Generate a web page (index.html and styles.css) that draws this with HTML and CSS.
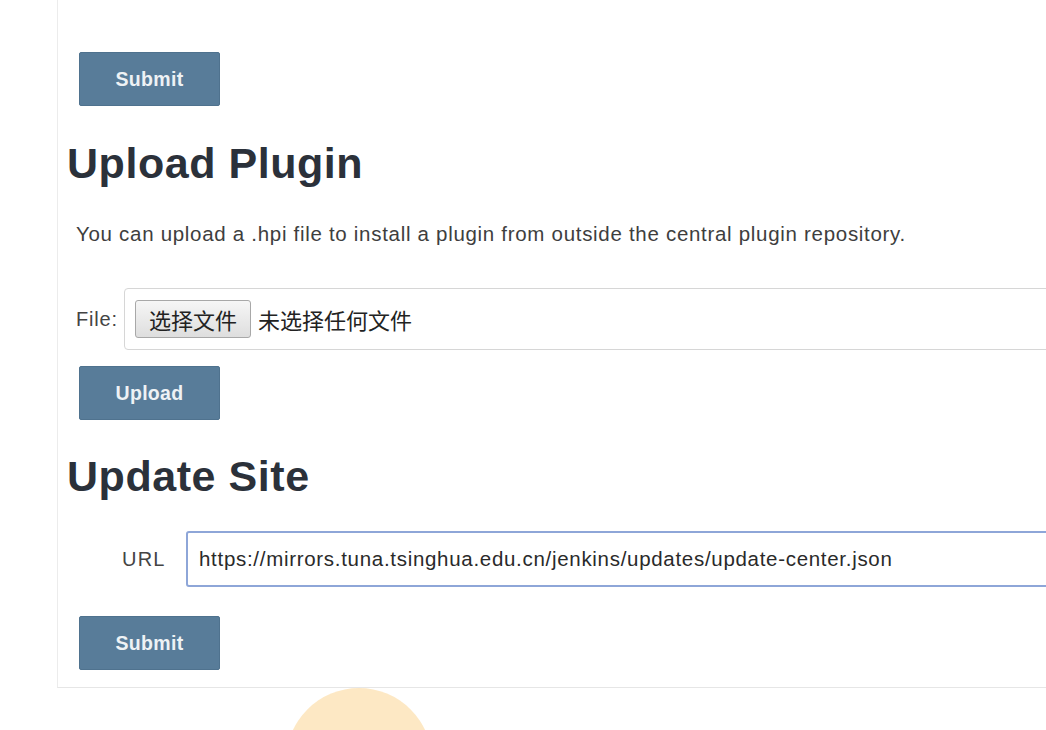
FILE: index.html
```html
<!DOCTYPE html>
<html lang="zh-CN">
<head>
<meta charset="utf-8">
<title>Plugin Manager - Advanced</title>
<link rel="stylesheet" href="styles.css">
</head>
<body>
<div class="page">
  <div class="panel">
    <button class="btn" type="button">Submit</button>

    <h1 class="section-title">Upload Plugin</h1>
    <p class="desc">You can upload a .hpi file to install a plugin from outside the central plugin repository.</p>
    <div class="file-row">
      <span class="file-label">File:</span>
      <div class="file-box">
        <span class="file-btn">选择文件</span>
        <span class="file-name">未选择任何文件</span>
      </div>
    </div>
    <button class="btn btn-upload" type="button">Upload</button>

    <h1 class="section-title section-update">Update Site</h1>
    <div class="url-row">
      <span class="url-label">URL</span>
      <input class="url-input" type="text" value="https://mirrors.tuna.tsinghua.edu.cn/jenkins/updates/update-center.json">
    </div>
    <button class="btn btn-submit2" type="button">Submit</button>
  </div>
  <div class="cursor-dot"></div>
</div>
</body>
</html>
```

FILE: styles.css
```css
html, body {
  margin: 0;
  padding: 0;
  background: #ffffff;
  overflow: hidden;
  height: 730px;
}

.page {
  position: relative;
  height: 730px;
  overflow: hidden;
  font-family: "Liberation Sans", Arial, "Noto Sans CJK SC", sans-serif;
  color: #333333;
}

.panel {
  margin-left: 57px;
  border-left: 1px solid #ececec;
  border-bottom: 1px solid #e6e6e6;
  padding-top: 52px;
  padding-bottom: 17px;
  display: flex;
  flex-direction: column;
  align-items: stretch;
}

.btn {
  display: block;
  align-self: flex-start;
  width: 141px;
  height: 54px;
  margin: 0 0 0 21px;
  padding: 0;
  border: 1px solid #4f728e;
  border-radius: 2px;
  background: #587c99;
  color: #eef2f5;
  font-family: "Liberation Sans", Arial, sans-serif;
  font-weight: bold;
  font-size: 19.5px;
  letter-spacing: 0.3px;
  cursor: pointer;
}

.section-title {
  margin: 32px 0 0 9px;
  font-size: 43px;
  line-height: 50px;
  font-weight: bold;
  color: #2b313a;
  letter-spacing: 0.55px;
}

.desc {
  margin: 34px 0 0 18px;
  font-size: 20.5px;
  letter-spacing: 0.7px;
  line-height: 24px;
  color: #3e3e3e;
  white-space: nowrap;
}

.file-row {
  margin-top: 42px;
  display: flex;
  align-items: center;
}

.file-label {
  flex: none;
  margin-left: 18px;
  width: 48px;
  font-size: 20px;
  letter-spacing: 0.8px;
  color: #444444;
}

.file-box {
  flex: none;
  width: 1000px;
  height: 62px;
  border: 1px solid #d6d6d6;
  border-radius: 4px;
  display: flex;
  align-items: center;
  padding-left: 10px;
  box-sizing: border-box;
}

.file-btn {
  display: flex;
  align-items: center;
  justify-content: center;
  width: 116px;
  height: 38px;
  box-sizing: border-box;
  border: 1px solid #a8a8a8;
  border-radius: 3px;
  background: linear-gradient(#f6f6f6, #dedede);
  font-family: "Noto Sans CJK SC", sans-serif;
  font-size: 22px;
  line-height: 1;
  color: #222222;
}

.file-name {
  margin-left: 7px;
  font-family: "Noto Sans CJK SC", sans-serif;
  font-size: 22px;
  line-height: 1;
  color: #222222;
}

.btn-upload {
  margin-top: 16px;
}

.section-update {
  margin-top: 31px;
}

.url-row {
  margin-top: 30px;
  display: flex;
  align-items: center;
}

.url-label {
  flex: none;
  margin-left: 64px;
  width: 64px;
  font-size: 20px;
  letter-spacing: 1.2px;
  color: #444444;
}

.url-input {
  flex: none;
  width: 950px;
  height: 56px;
  box-sizing: border-box;
  margin: 0;
  border: 2px solid #8ea6d8;
  border-radius: 3px;
  padding: 0 0 0 11px;
  font-family: "Liberation Sans", Arial, sans-serif;
  font-size: 20.5px;
  letter-spacing: 0.7px;
  color: #2a2a2a;
  background: #ffffff;
  outline: none;
}

.btn-submit2 {
  margin-top: 29px;
}

.cursor-dot {
  position: absolute;
  left: 286px;
  top: 688px;
  width: 146px;
  height: 146px;
  border-radius: 50%;
  background: rgba(252, 224, 176, 0.75);
}
```
